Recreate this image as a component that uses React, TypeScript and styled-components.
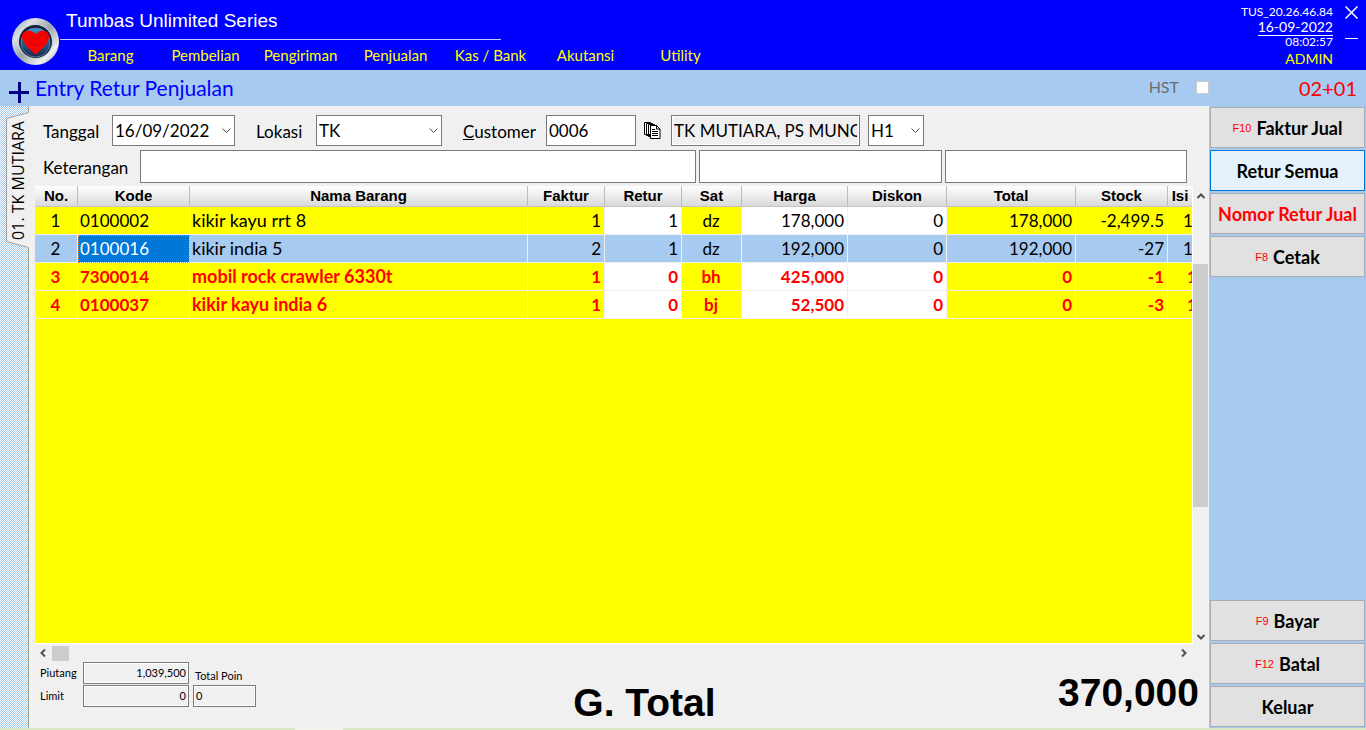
import React from "react";
import styled, { createGlobalStyle, css } from "styled-components";

const GlobalStyle = createGlobalStyle`
  *, *::before, *::after { box-sizing: border-box; }
  body {
    margin: 0;
    font-family: Lato, "Noto Sans", sans-serif;
    color: #000;
    background: #f0f0f0;
  }
  button, input, select { font-family: inherit; color: inherit; margin: 0; }
`;

const Page = styled.div`
  min-height: 100vh;
  display: flex;
  flex-direction: column;
`;

/* ---------- top bar ---------- */

const TopBar = styled.header`
  display: flex;
  height: 70px;
  background: #0000ff;
  color: #fff;
`;

const Logo = styled.svg`
  width: 48px;
  height: 48px;
  margin: 18px 0 0 12px;
  flex: none;
`;

const Brand = styled.div`
  flex: 1;
  min-width: 0;
`;

const BrandTitle = styled.h1`
  margin: 0;
  width: 441px;
  height: 40px;
  padding: 0 6px;
  border-bottom: 1px solid #c8c8ff;
  font: 400 19px/42px "Liberation Sans", Arial, sans-serif;
`;

const Menu = styled.nav`
  display: flex;
  padding-left: 3px;
`;

const MenuItem = styled.a`
  width: 95px;
  text-align: center;
  font-size: 15px;
  line-height: 30px;
  color: #ffff00;
  text-decoration: none;
  white-space: nowrap;
`;

const Session = styled.div`
  display: flex;
  flex-direction: column;
  align-items: flex-end;
  padding-top: 4px;
  font-size: 12px;
  line-height: 15px;
`;

const SessionDate = styled.span`
  font-size: 14px;
  line-height: 16px;
  border-bottom: 1px solid #fff;
`;

const SessionTime = styled.span`
  line-height: 12px;
`;

const SessionUser = styled.span`
  font-size: 14px;
  line-height: 22px;
  color: #ffff00;
`;

const WindowButtons = styled.div`
  display: flex;
  flex-direction: column;
  gap: 12px;
  padding: 6px 8px 0 12px;
`;

const WindowButton = styled.button`
  display: flex;
  width: 13px;
  height: 13px;
  padding: 0;
  border: 0;
  background: none;
  color: #fff;
`;

/* ---------- title strip ---------- */

const TitleStrip = styled.div`
  display: flex;
  align-items: center;
  height: 36px;
  padding: 0 9px;
  background: #a6caf0;
`;

const AddButton = styled.button`
  display: flex;
  padding: 8px 0 0;
  border: 0;
  background: none;
`;

const PageTitle = styled.h2`
  flex: 1;
  margin: 0 0 0 6px;
  font-size: 21px;
  line-height: 26px;
  font-weight: 400;
  color: #0000ff;
`;

const HstLabel = styled.label`
  display: flex;
  align-items: center;
  gap: 17px;
  padding-bottom: 2px;
  font-size: 16px;
  line-height: 20px;
  color: #6d6d6d;
`;

const HstBox = styled.input`
  appearance: none;
  width: 13px;
  height: 13px;
  margin: 0;
  border: 1px solid #ccc;
  background: #fff;
`;

const SlotCode = styled.span`
  width: 148px;
  text-align: right;
  font-size: 20px;
  color: #ff0000;
`;

/* ---------- body ---------- */

const Body = styled.div`
  flex: 1;
  display: flex;
  min-height: 0;
`;

const TabRail = styled.div`
  flex: none;
  width: 29px;
  border-right: 1px solid #a0a0a0;
  background: repeating-conic-gradient(#a6caf0 0 25%, #fff 0 50%) 0 0 / 2px 2px;
`;

const DocTab = styled.button`
  position: relative;
  display: flex;
  align-items: center;
  justify-content: center;
  width: 23px;
  height: 136px;
  margin: 6px 0 0 6px;
  padding: 0;
  border: 0;
  background: none;
`;

const TabShape = styled.svg`
  position: absolute;
  inset: 0;
`;

const TabText = styled.span`
  position: relative;
  writing-mode: vertical-rl;
  transform: rotate(180deg);
  font: 400 16px/20px "Open Sans", "Noto Sans", sans-serif;
  white-space: nowrap;
`;

const Main = styled.main`
  flex: 1;
  min-width: 0;
  display: flex;
  flex-direction: column;
  background: #f0f0f0;
`;

const FormArea = styled.form`
  display: flex;
  flex-direction: column;
  gap: 4px;
  padding: 9px 22px 3px 14px;
`;

const FormRow = styled.div`
  display: flex;
  align-items: center;
`;

const Label = styled.label<{ $w: number }>`
  flex: none;
  width: ${(p) => p.$w}px;
  padding-top: 3px;
  font-size: 17px;
  line-height: 20px;
`;

const fieldBox = css`
  height: 31px;
  border: 1px solid #7a7a7a;
  border-radius: 0;
  background: #fff;
  font-size: 17px;
  padding: 0 2px;
  outline: 0;
`;

const Field = styled.input<{ $w: number; $gap?: number }>`
  ${fieldBox}
  flex: none;
  width: ${(p) => p.$w}px;
  margin-right: ${(p) => p.$gap ?? 0}px;
  &:read-only {
    background: #f0f0f0;
    box-shadow: inset 0 0 0 1px #fff;
  }
`;

const WideField = styled.input`
  ${fieldBox}
  height: 33px;
  width: 100%;
  min-width: 0;
`;

const WideFields = styled.div`
  flex: 1;
  display: grid;
  grid-template-columns: 556fr 243fr 242fr;
  gap: 3px;
`;

const SelectWrap = styled.div<{ $w: number; $gap: number }>`
  position: relative;
  flex: none;
  width: ${(p) => p.$w}px;
  margin-right: ${(p) => p.$gap}px;
`;

const Select = styled.select`
  ${fieldBox}
  display: block;
  appearance: none;
  width: 100%;
`;

const SelectArrow = styled.svg`
  position: absolute;
  right: 4px;
  top: 13px;
  pointer-events: none;
`;

const LookupButton = styled.button`
  display: flex;
  margin: 0 10px 0 8px;
  padding: 0;
  border: 0;
  background: none;
`;

/* ---------- grid ---------- */

const GridArea = styled.section`
  flex: 1;
  display: grid;
  grid-template-columns: minmax(0, 1fr) 16px;
  grid-template-rows: minmax(0, 1fr) 17px;
  margin-left: 6px;
`;

const GridView = styled.div`
  min-width: 0;
  overflow: hidden;
  background: #ffff00;
  border-right: 1px solid #fff;
  border-bottom: 1px solid #fff;
`;

const Table = styled.table`
  width: 100%;
  table-layout: fixed;
  border-collapse: separate;
  border-spacing: 0;
`;

type Align = "left" | "center" | "right";

const Th = styled.th`
  height: 21px;
  padding: 0;
  overflow: hidden;
  border-right: 1px solid #bdbdbd;
  border-bottom: 1px solid #c4c4c4;
  background: linear-gradient(#fff, #d9d9d9);
  font: 700 15px/20px "Liberation Sans", Arial, sans-serif;
  white-space: nowrap;
  &:last-child { border-right: 0; }
`;

const Td = styled.td<{ $align: Align; $open: boolean }>`
  height: 28px;
  padding: 0 3px 0 2px;
  overflow: hidden;
  text-align: ${(p) => p.$align};
  font-size: 17px;
  line-height: 27px;
  white-space: nowrap;
  border-right: 1px solid #f0f0f0;
  border-bottom: 1px solid #f0f0f0;
  background: ${(p) => (p.$open ? "#fff" : "#ffff00")};
  &:nth-child(3) { font-size: 18px; }
  &:last-child { padding: 0 0 0 15px; border-right: 0; }
`;

const Tr = styled.tr<{ $tone: "normal" | "selected" | "alert" }>`
  ${(p) =>
    p.$tone === "selected" &&
    css`
      ${Td} { background: #a6caf0; }
      ${Td}:nth-child(2) {
        background: #0078d7;
        color: #fff;
        outline: 1px dotted #ff8728;
        outline-offset: -1px;
      }
    `}
  ${(p) =>
    p.$tone === "alert" &&
    css`
      ${Td} { color: #ff0000; font-weight: 700; }
      ${Td}:last-child { padding-left: 19px; }
    `}
`;

const VScroll = styled.div`
  display: flex;
  flex-direction: column;
  align-items: center;
  padding: 5px 1px 2px 0;
`;

const VTrack = styled.div`
  flex: 1;
  width: 15px;
  margin: 4px 0;
  display: grid;
  grid-template-rows: 59fr 242fr 121fr;
`;

const VThumb = styled.div`
  grid-row: 2;
  background: #cdcdcd;
`;

const HScroll = styled.div`
  display: flex;
  align-items: center;
  padding: 1px 4px 0 3px;
`;

const HThumb = styled.div`
  width: 17px;
  height: 15px;
  margin: 0 auto 0 4px;
  background: #cdcdcd;
`;

/* ---------- totals ---------- */

const Footer = styled.footer`
  display: grid;
  grid-template-columns: 227px minmax(0, 1fr) auto;
  height: 67px;
  padding: 0 10px 0 11px;
`;

const Balances = styled.div`
  display: grid;
  grid-template-columns: 39px 106px 63px;
  grid-template-rows: 22px 22px;
  gap: 1px 4px;
  align-content: start;
  padding-top: 1px;
  font-size: 11px;
`;

const SmallLabel = styled.label`
  align-self: center;
  line-height: 16px;
  white-space: nowrap;
`;

const PointLabel = styled(SmallLabel)`
  align-self: end;
  padding-left: 2px;
`;

const SmallField = styled.input<{ $align: Align }>`
  width: 100%;
  height: 22px;
  border: 1px solid #7a7a7a;
  box-shadow: inset 0 0 0 1px #fff;
  background: #f0f0f0;
  padding: 0 2px 2px;
  font-size: 11px;
  text-align: ${(p) => p.$align};
`;

const GrandLabel = styled.div`
  padding: 19px 36px 0 0;
  text-align: center;
  font: 700 39px/46px "Liberation Sans", Arial, sans-serif;
`;

const GrandTotal = styled.output`
  padding-top: 9px;
  font: 700 39px/46px "Liberation Sans", Arial, sans-serif;
`;

/* ---------- side bar ---------- */

const SideBar = styled.aside`
  flex: none;
  width: 157px;
  display: flex;
  flex-direction: column;
  justify-content: space-between;
  padding: 1px;
  background: #a6caf0;
`;

const ButtonStack = styled.div`
  display: flex;
  flex-direction: column;
  gap: 2px;
`;

const SideButton = styled.button<{ $active?: boolean; $alert?: boolean }>`
  display: flex;
  align-items: center;
  justify-content: center;
  gap: 5px;
  height: 41px;
  padding: 0;
  border: 1px solid ${(p) => (p.$active ? "#0078d7" : "#adadad")};
  background: ${(p) => (p.$active ? "#e5f1fb" : "#e1e1e1")};
  color: ${(p) => (p.$alert ? "#ff0000" : "#000")};
  font-size: 18px;
  font-weight: 700;
  white-space: nowrap;
`;

const KeyHint = styled.span`
  font: 400 11px/16px "Liberation Sans", Arial, sans-serif;
  color: #ff0000;
`;

const BottomEdge = styled.div`
  height: 2px;
  background: linear-gradient(90deg, #d9e8c5 295px, #f0f4ea 295px 343px, #d9e8c5 343px);
`;

/* ---------- data ---------- */

const menu = ["Barang", "Pembelian", "Pengiriman", "Penjualan", "Kas / Bank", "Akutansi", "Utility"];

const columns: { name: string; width?: number; align: Align; open?: boolean }[] = [
  { name: "No.", width: 43, align: "center" },
  { name: "Kode", width: 112, align: "left" },
  { name: "Nama Barang", align: "left" },
  { name: "Faktur", width: 77, align: "right" },
  { name: "Retur", width: 77, align: "right", open: true },
  { name: "Sat", width: 60, align: "center" },
  { name: "Harga", width: 106, align: "right", open: true },
  { name: "Diskon", width: 99, align: "right", open: true },
  { name: "Total", width: 129, align: "right" },
  { name: "Stock", width: 92, align: "right" },
  { name: "Isi", width: 24, align: "left" },
];

const rows: { tone: "normal" | "selected" | "alert"; cells: string[] }[] = [
  { tone: "normal", cells: ["1", "0100002", "kikir kayu rrt 8", "1", "1", "dz", "178,000", "0", "178,000", "-2,499.5", "1"] },
  { tone: "selected", cells: ["2", "0100016", "kikir india 5", "2", "1", "dz", "192,000", "0", "192,000", "-27", "1"] },
  { tone: "alert", cells: ["3", "7300014", "mobil rock crawler 6330t", "1", "0", "bh", "425,000", "0", "0", "-1", "1"] },
  { tone: "alert", cells: ["4", "0100037", "kikir kayu india 6", "1", "0", "bj", "52,500", "0", "0", "-3", "1"] },
];

/* ---------- drawings ---------- */

const Chevron = ({ turn }: { turn: number }) => (
  <svg width="10" height="10" viewBox="0 0 10 10" fill="none" stroke="#505050" strokeWidth="2">
    <path d="M1.5 7 5 3.5 8.5 7" transform={`rotate(${turn} 5 5)`} />
  </svg>
);

const Dropdown = (p: { id: string; value: string; w: number; gap: number; label?: string }) => (
  <SelectWrap $w={p.w} $gap={p.gap}>
    <Select id={p.id} defaultValue={p.value} aria-label={p.label}>
      <option>{p.value}</option>
    </Select>
    <SelectArrow width="9" height="6" viewBox="0 0 9 6" fill="none" stroke="#505050">
      <path d="M.5 .5 4.5 4.5 8.5 .5" />
    </SelectArrow>
  </SelectWrap>
);

const HeartLogo = () => (
  <Logo viewBox="0 0 48 48" aria-label="Tumbas">
    <defs>
      <linearGradient id="ring" x1="0" y1="0" x2="1" y2="1">
        <stop offset="0" stopColor="#7f93a3" />
        <stop offset=".25" stopColor="#dfe3e6" />
        <stop offset=".5" stopColor="#9aa5ad" />
        <stop offset=".78" stopColor="#f1f1ef" />
        <stop offset="1" stopColor="#83919d" />
      </linearGradient>
      <linearGradient id="glass" x1="0" y1="0" x2="0" y2="1">
        <stop offset="0" stopColor="#3a98cf" />
        <stop offset=".55" stopColor="#1d5a8e" />
        <stop offset="1" stopColor="#20264a" />
      </linearGradient>
    </defs>
    <circle cx="23.5" cy="23.5" r="23.5" fill="url(#ring)" />
    <circle cx="23.5" cy="23.5" r="17.5" fill="#c9d1d8" />
    <circle cx="23.5" cy="23.5" r="16.5" fill="#14203a" />
    <circle cx="23.5" cy="24.5" r="14.5" fill="url(#glass)" stroke="#5d88aa" strokeWidth=".8" />
    <path
      d="M23.5 36.5C20 32.5 10.5 26.5 10 19.5 9.8 14.5 13.5 12.5 17 12.8c3 .2 5.5 1.6 6.8 3.7 1.2-2.2 3.7-3.600 6.5-3.7 3.6-.1 7 2.2 6.700 6.700-.4 7-9.500 13-13.500 17z"
      fill="#ff0000"
    />
    <path
      d="M33.5 15c2 3 1.5 7-2 9.5-3 2-7.5 3.5-11 1.8-3-1.5-3.5-5-1-6.2 2-.9 3.6 1.2 5.5.8 3-.6 3.5-4.5 6-5.6"
      fill="none"
      stroke="#8c1414"
      strokeWidth=".8"
      strokeDasharray="1.5 1"
    />
  </Logo>
);

const PagesIcon = () => (
  <svg width="17" height="17" viewBox="0 0 17 17" fill="#fff" stroke="#000" strokeWidth="1">
    <path d="M.5 .5h6v12h-6zM2.5 1.5h6v12h-6zM4.5 2.5h6v12h-6z" />
    <path d="M6.5 3.5h6l3.5 3.5v9.5H6.5z" />
    <path d="M12.5 3.5v3.5H16" fill="none" />
    <path d="M8 7.5h3M8 9.5h6M8 11.5h6M8 13.5h6" />
  </svg>
);

/* ---------- screen ---------- */

export default function App() {
  return (
    <Page>
      <GlobalStyle />
      <TopBar>
        <HeartLogo />
        <Brand>
          <BrandTitle>Tumbas Unlimited Series</BrandTitle>
          <Menu>
            {menu.map((m) => (
              <MenuItem key={m} href="#">{m}</MenuItem>
            ))}
          </Menu>
        </Brand>
        <Session>
          <span>TUS_20.26.46.84</span>
          <SessionDate>16-09-2022</SessionDate>
          <SessionTime>08:02:57</SessionTime>
          <SessionUser>ADMIN</SessionUser>
        </Session>
        <WindowButtons>
          <WindowButton aria-label="Close">
            <svg width="13" height="13" viewBox="0 0 13 13" stroke="#fff" strokeWidth="1.5">
              <path d="M.5 .5l12 12M12.5 .5l-12 12" />
            </svg>
          </WindowButton>
          <WindowButton aria-label="Minimize">
            <svg width="13" height="13" viewBox="0 0 13 13" stroke="#fff">
              <path d="M0 7.5h13" />
            </svg>
          </WindowButton>
        </WindowButtons>
      </TopBar>

      <TitleStrip>
        <AddButton aria-label="Add">
          <svg width="20" height="21" viewBox="0 0 20 21" stroke="#000080" strokeWidth="3">
            <path d="M0 10.5h20M10.5 0v21" />
          </svg>
        </AddButton>
        <PageTitle>Entry Retur Penjualan</PageTitle>
        <HstLabel>
          HST
          <HstBox type="checkbox" />
        </HstLabel>
        <SlotCode>02+01</SlotCode>
      </TitleStrip>

      <Body>
        <TabRail>
          <DocTab>
            <TabShape width="23" height="136" viewBox="0 0 23 136">
              <path d="M23 0 .5 6.5v123L23 136z" fill="#f0f0f0" />
              <path d="M22.5 .5 .5 6.5v123l22 6" fill="none" stroke="#a0a0a0" />
            </TabShape>
            <TabText>01. TK MUTIARA</TabText>
          </DocTab>
        </TabRail>

        <Main>
          <FormArea>
            <FormRow>
              <Label $w={69} htmlFor="tanggal">Tanggal</Label>
              <Dropdown id="tanggal" value="16/09/2022" w={123} gap={21} />
              <Label $w={60} htmlFor="lokasi">Lokasi</Label>
              <Dropdown id="lokasi" value="TK" w={126} gap={21} />
              <Label $w={83} htmlFor="customer"><u>C</u>ustomer</Label>
              <Field id="customer" $w={90} defaultValue="0006" />
              <LookupButton type="button" aria-label="Customer list"><PagesIcon /></LookupButton>
              <Field $w={189} $gap={8} readOnly value="TK MUTIARA, PS MUNCAR" aria-label="Customer name" />
              <Dropdown id="harga" value="H1" w={56} gap={0} label="Price level" />
            </FormRow>
            <FormRow>
              <Label $w={97} htmlFor="keterangan">Keterangan</Label>
              <WideFields>
                <WideField id="keterangan" />
                <WideField aria-label="Keterangan 2" />
                <WideField aria-label="Keterangan 3" />
              </WideFields>
            </FormRow>
          </FormArea>

          <GridArea>
            <GridView>
              <Table>
                <colgroup>
                  {columns.map((c) => (
                    <col key={c.name} width={c.width} />
                  ))}
                </colgroup>
                <thead>
                  <tr>
                    {columns.map((c) => (
                      <Th key={c.name} scope="col">{c.name}</Th>
                    ))}
                  </tr>
                </thead>
                <tbody>
                  {rows.map((r) => (
                    <Tr key={r.cells[0]} $tone={r.tone}>
                      {r.cells.map((v, i) => (
                        <Td key={i} $align={columns[i].align} $open={!!columns[i].open}>{v}</Td>
                      ))}
                    </Tr>
                  ))}
                </tbody>
              </Table>
            </GridView>
            <VScroll>
              <Chevron turn={0} />
              <VTrack><VThumb /></VTrack>
              <Chevron turn={180} />
            </VScroll>
            <HScroll>
              <Chevron turn={-90} />
              <HThumb />
              <Chevron turn={90} />
            </HScroll>
          </GridArea>

          <Footer>
            <Balances>
              <SmallLabel htmlFor="piutang">Piutang</SmallLabel>
              <SmallField id="piutang" $align="right" readOnly value="1,039,500" />
              <PointLabel htmlFor="poin">Total Poin</PointLabel>
              <SmallLabel htmlFor="limit">Limit</SmallLabel>
              <SmallField id="limit" $align="right" readOnly value="0" />
              <SmallField id="poin" $align="left" readOnly value="0" />
            </Balances>
            <GrandLabel>G. Total</GrandLabel>
            <GrandTotal>370,000</GrandTotal>
          </Footer>
        </Main>

        <SideBar>
          <ButtonStack>
            <SideButton><KeyHint>F10</KeyHint>Faktur Jual</SideButton>
            <SideButton $active>Retur Semua</SideButton>
            <SideButton $alert>Nomor Retur Jual</SideButton>
            <SideButton><KeyHint>F8</KeyHint>Cetak</SideButton>
          </ButtonStack>
          <ButtonStack>
            <SideButton><KeyHint>F9</KeyHint>Bayar</SideButton>
            <SideButton><KeyHint>F12</KeyHint>Batal</SideButton>
            <SideButton>Keluar</SideButton>
          </ButtonStack>
        </SideBar>
      </Body>
      <BottomEdge />
    </Page>
  );
}
